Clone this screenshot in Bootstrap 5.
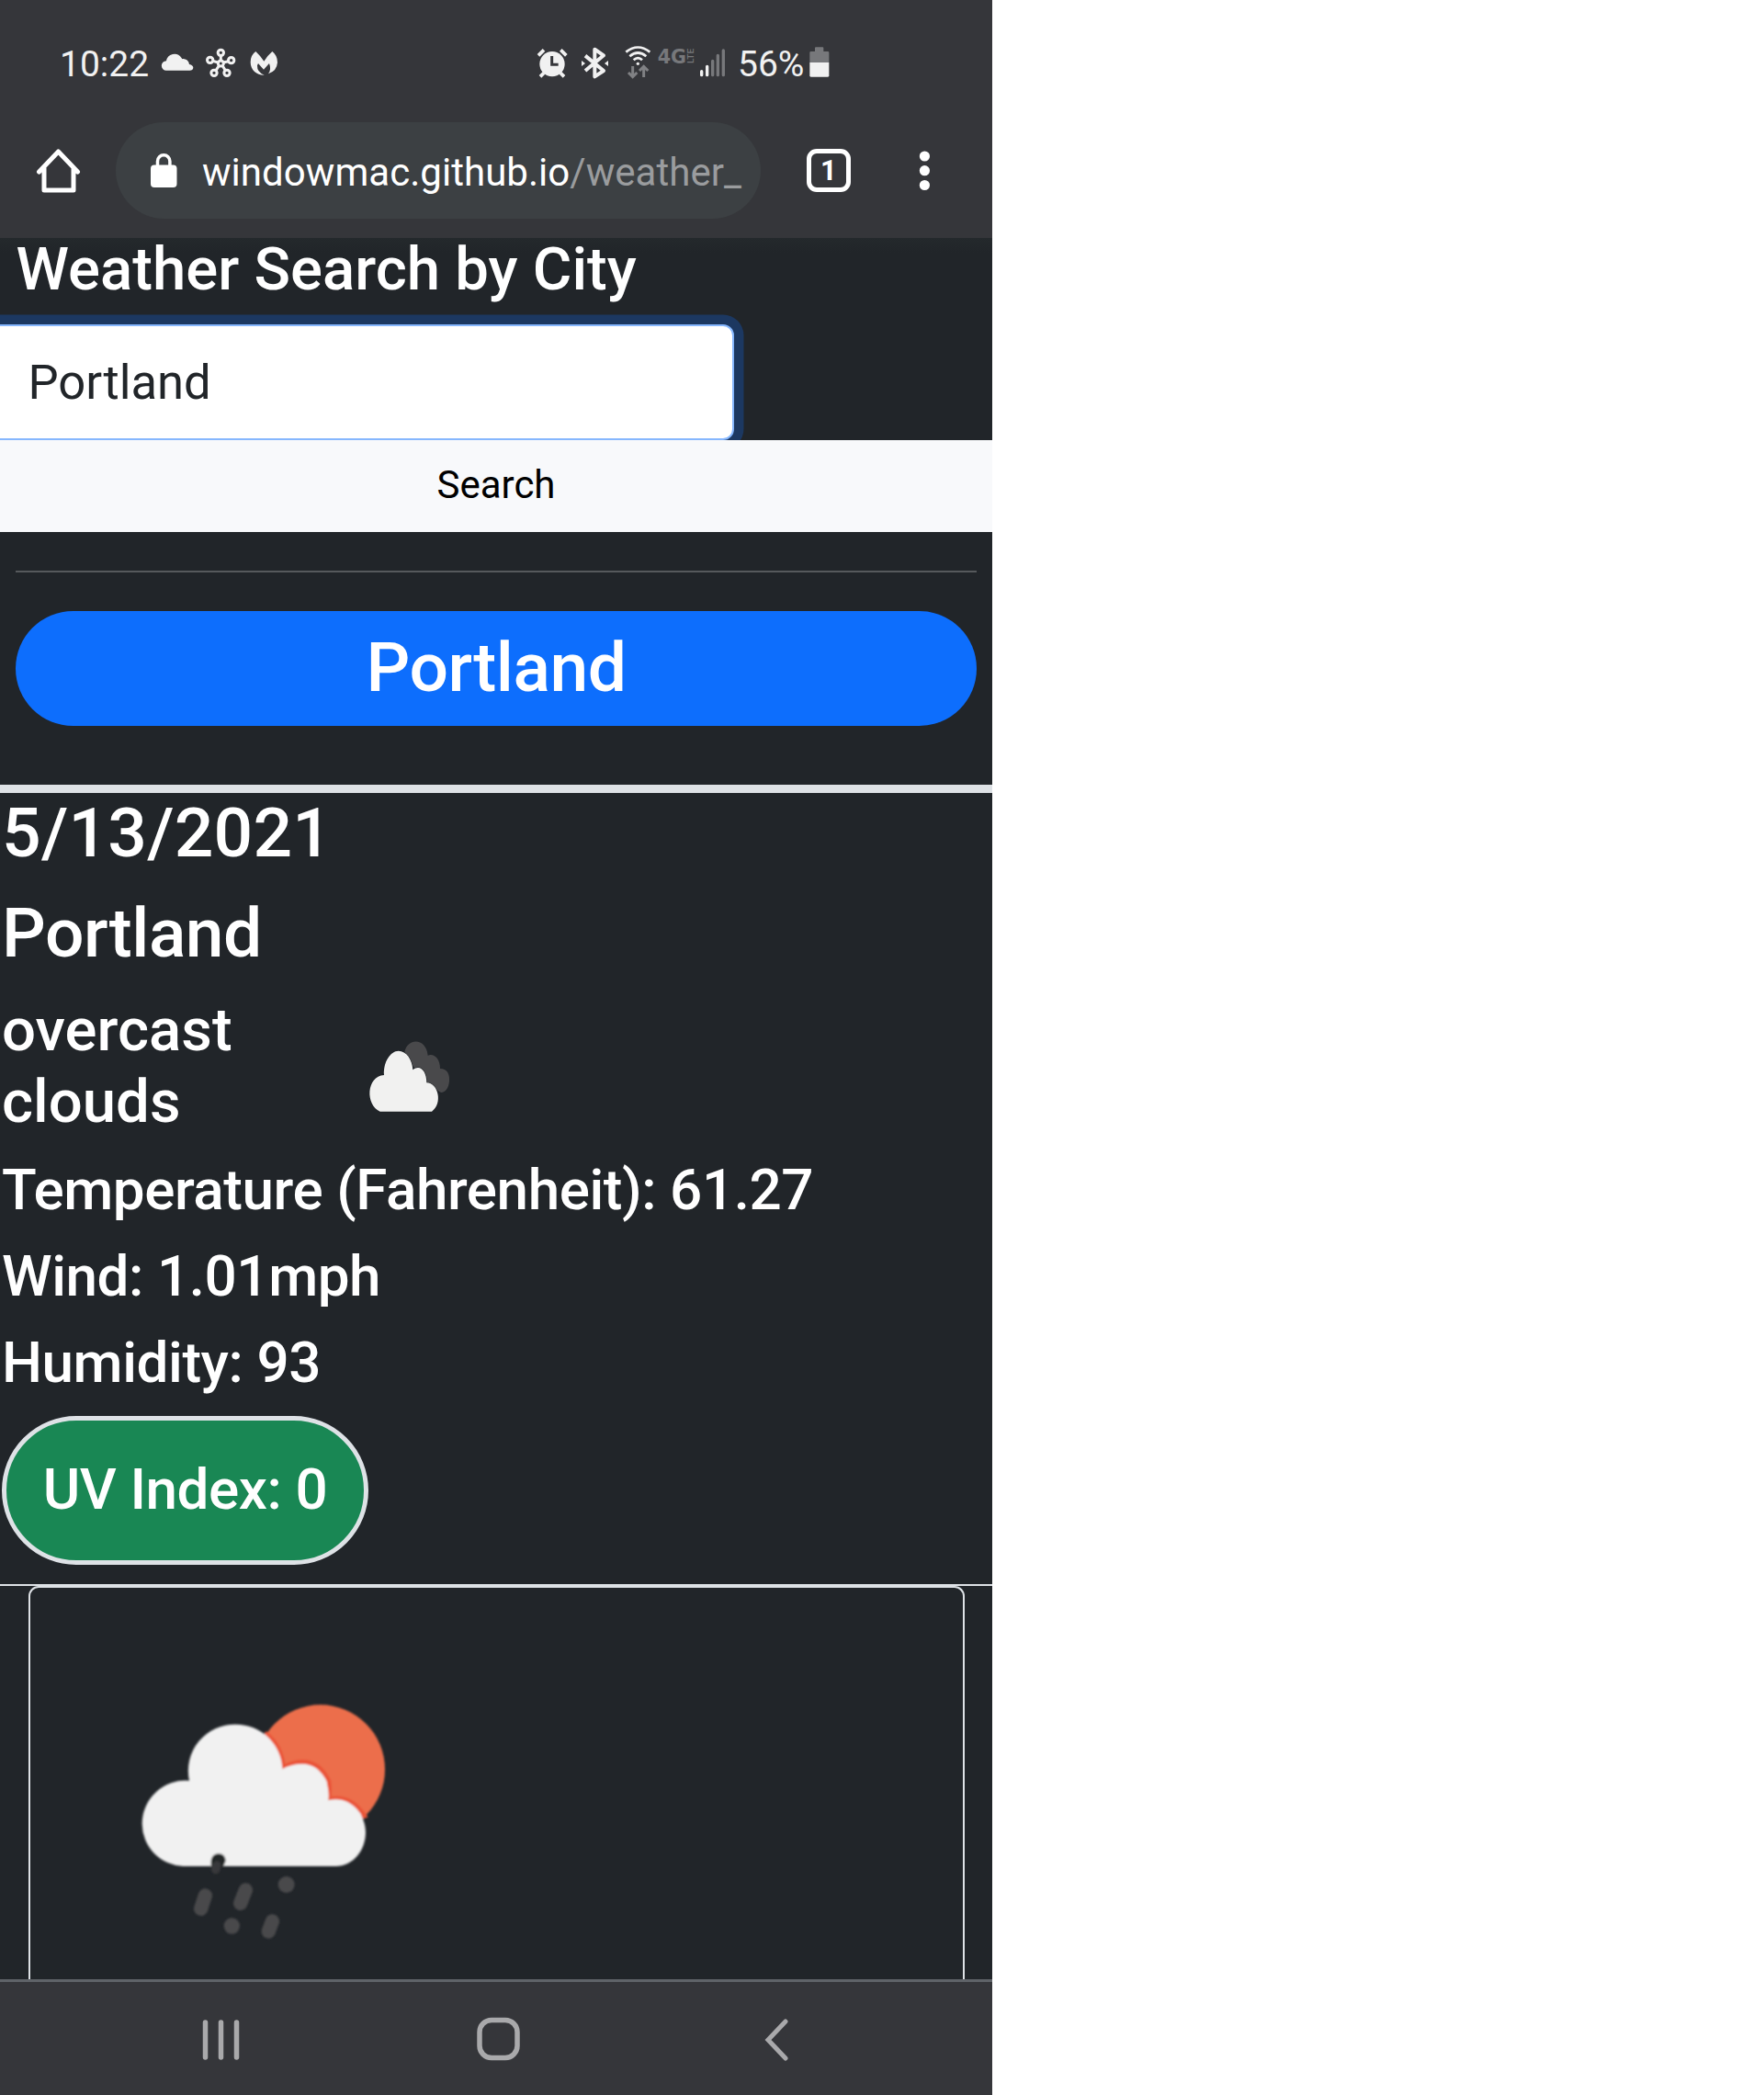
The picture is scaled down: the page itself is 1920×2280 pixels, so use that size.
<!DOCTYPE html>
<html lang="en">
<head>
<meta charset="utf-8">
<meta name="viewport" content="width=device-width, initial-scale=1">
<title>Weather Search by City</title>
<link href="https://cdn.jsdelivr.net/npm/bootstrap@5.3.0/dist/css/bootstrap.min.css" rel="stylesheet">
<style>
body{font-family:Roboto,"Liberation Sans",sans-serif;background:#fff;margin:0}
svg{display:block;flex:none}
.phone{width:1080px;height:2280px;background:#212529;color:#fff}
.chrome{background:#35363a;height:259px;flex:none}
.status{height:80px;margin-top:30px;padding-left:65px;color:#f1f1f1;font-size:39px;line-height:80px}
.status-text{white-space:nowrap}
.clock{width:108px}
.status-right{margin-left:267px}
.percent{width:77px;margin-left:7px}
.toolbar{height:149px;padding:2px 0 0 39px}
.omnibox{width:702px;height:105px;margin-left:38px;padding-left:36px;background:#3c4043;font-size:42px;white-space:nowrap;border-radius:53px}
.url{margin-left:26px;padding-top:4px;letter-spacing:.04px}
.url-path{color:#9a9c9e}
.tab-count{width:48px;height:47px;margin-left:50px;border:5px solid #fff;border-radius:11px;font-size:31px;font-weight:700;line-height:1}
.page{flex:1 1 0;min-height:0}
.fade-top{height:16px;margin-bottom:-16px;background:linear-gradient(#24292c,#212529);flex:none}
.txt-title{font-size:65.3px;font-weight:500;padding:0 0 17px 17.5px;margin:0;height:94px;white-space:nowrap;line-height:68px}
.city-input,.city-input:focus{width:815px;height:126px;margin-left:-16px;padding:0 0 0 44.5px;font-size:52.6px;color:#212529;background:#fff;border:2px solid #86b7fe;border-radius:12px;box-shadow:0 0 0 10.5px #1c3861}
.btn-search{height:100px;padding:0 0 3px;font-size:42px;line-height:1;background:#f8f9fb;color:#000;border:0;border-radius:0;position:relative}
.rule{height:2px;margin:42px 17px;background:#56595c}
.city-pill{height:125px;margin:0 17px 64px;padding-bottom:2px;background:#0d6efd;font-size:75px;letter-spacing:-.5px;font-weight:500;border-radius:63px}
.report{height:872px;border-top:9px solid #dee2e6;border-bottom:2px solid #dee2e6;padding-left:2px;flex:none}
.txt-xl{font-size:75px;line-height:90px;height:90px;font-weight:500;margin:-2px 0 21px}
.txt-date{letter-spacing:.25px}
.txt-city{letter-spacing:-.5px}
.txt-lg{font-size:65.3px;line-height:77.6px;height:155px;font-weight:500;margin:0;width:391px}
.txt-md{font-size:62px;line-height:74.4px;height:74px;font-weight:500;margin:0 0 20px;white-space:nowrap;letter-spacing:-.44px}
.cond{margin:22px 0 21px}
.cond-icon{margin-top:29px}
.uv{width:399px;height:162px;margin-top:21px;border:5px solid #dee2e6;border-radius:81px;background:#198754;font-size:62px;font-weight:500;white-space:nowrap;padding-bottom:3px;letter-spacing:-.44px}
.forecast{margin:0 30px 0 31px;border:2px solid #dee2e6;border-bottom:0;border-radius:11px 11px 0 0;flex:1 1 auto;padding:102px 0 0 97px}
.navkeys{height:126px;flex:none;background:#35363a;border-top:3px solid #5f6368;padding-left:218px}
.key-home{margin-left:254px;margin-top:2px}
.key-back{margin-left:260px}
</style>
<script src="https://cdn.jsdelivr.net/npm/bootstrap@5.3.0/dist/js/bootstrap.bundle.min.js"></script>
</head>
<body>
<div class="phone d-flex flex-column overflow-hidden">
  <header class="chrome d-flex flex-column">
    <div class="status d-flex">
      <span class="status-text clock">10:22</span>
      <svg width="140" height="80" viewBox="400 0 420 240" fill="#f1f1f1">
        <path d="M424 140a15 15 0 0 1 0-31a27 27 0 0 1 49-11q4 6 5 4a20 20 0 0 1 21 18q13 3 13 11q-1 9-12 9z"/>
        <g fill="none" stroke="#f1f1f1" stroke-width="9"><circle cx="602" cy="117" r="9"/><circle cx="602" cy="82" r="9.500"/><circle cx="567" cy="106" r="9.500"/><circle cx="636" cy="107" r="9.500"/><circle cx="580" cy="148" r="9.500"/><circle cx="622" cy="148" r="9.500"/><path d="M602 92v16M576 109l17 5M627 110l-17 4M586 140l10-15M617 140l-9-15"/></g>
        <path d="M716 78q-17 12-17 35c0 26 22 43 45 42q-24-9-23-31l3-7l18 20l18-20q8 20-3 34q28-9 30-37q0-23-17-36q-16 14-27 32q-10-16-27-32z"/>
      </svg>
      <svg class="status-right" width="216" height="80" viewBox="60 0 648 240" fill="#f1f1f1">
        <g><circle cx="123" cy="119" r="41"/><path d="M78 91l18-18M151 73l18 18M84 160l12-12M162 160l-12-12" stroke="#f1f1f1" stroke-width="11" fill="none"/><path d="M122 93v28h21" stroke="#35363a" stroke-width="9" fill="none"/></g>
        <path d="M231 92L291 141L262 160V71L291 91L231 141" fill="none" stroke="#f1f1f1" stroke-width="12" stroke-linejoin="round"/><path d="M219 108l12 9l-12 9zM306 108l-12 9l12 9z"/>
        <g fill="none" stroke="#f1f1f1" stroke-width="8"><path d="M364 80q39-31 78 0M376 94q27-23 54 0M389 106q14-13 28 0"/></g><circle cx="403" cy="118" r="5"/>
        <g fill="none" stroke="#808184" stroke-width="9"><path d="M386 126v34M372 147l14 14l14-14M422 162v-34M408 141l14-14l14 14"/></g>
        <text x="467" y="116" font-family="DejaVu Sans" font-size="64" font-weight="700" fill="#77787b" textLength="94" lengthAdjust="spacingAndGlyphs">4G</text>
        <text transform="translate(584 117) rotate(-90)" font-family="Roboto" font-size="27" font-weight="500" fill="#77787b" textLength="49" lengthAdjust="spacingAndGlyphs">LTE</text>
        <g stroke-width="10" stroke-linecap="round"><path stroke="#f1f1f1" d="M611 143v12M629 127v28"/><path stroke="#77787b" d="M647 109v46M664 91v64M682 75v80"/></g>
      </svg>
      <span class="status-text percent">56%</span>
      <svg width="24" height="80" viewBox="959 0 72 240"><path fill="#77787b" d="M963 114V82q0-4 4-4h13V67q0-3 3-3h22q3 0 3 3v11h14q4 0 4 4v32z"/><path fill="#f1f1f1" d="M963 114h63v43q0 4-4 4h-55q-4 0-4-4z"/></svg>
    </div>
    <div class="toolbar d-flex align-items-center">
      <svg width="49" height="49" viewBox="0 0 49 49" fill="none" stroke="#fff" stroke-width="5" stroke-linejoin="round" stroke-linecap="round"><path d="M3.500 26L24.500 4L45.500 26M9 22v24h32V22"/></svg>
      <div class="omnibox d-flex align-items-center">
        <svg width="32" height="40" viewBox="0 0 32 40"><rect x="2" y="13.500" width="28.500" height="24.500" rx="4" fill="#fff"/><path d="M9.500 15V9.500a6.700 6.700 0 0 1 13.400 0v5" fill="none" stroke="#fff" stroke-width="3.500"/></svg>
        <span class="url">windowmac.github.io<span class="url-path">/weather_</span></span>
      </div>
      <div class="tab-count d-flex align-items-center justify-content-center">1</div>
      <svg class="ms-auto" width="149" height="48" viewBox="0 0 149 48" fill="#fff"><circle cx="75.400" cy="8" r="5.600"/><circle cx="75.400" cy="23.700" r="5.600"/><circle cx="75.400" cy="39.500" r="5.600"/></svg>
    </div>
  </header>

  <main class="page d-flex flex-column">
    <div class="fade-top"></div>
    <h3 class="txt-title">Weather Search by City</h3>
    <input class="form-control city-input flex-shrink-0" type="text" value="Portland" aria-label="City">
    <button class="btn btn-light btn-search flex-shrink-0" type="button">Search</button>
    <div class="rule flex-shrink-0"></div>
    <div class="city-pill d-flex align-items-center justify-content-center flex-shrink-0">Portland</div>

    <section class="report">
      <h1 class="txt-xl txt-date">5/13/2021</h1>
      <h1 class="txt-xl txt-city">Portland</h1>
      <div class="cond d-flex">
        <h3 class="txt-lg">overcast<br>clouds</h3>
        <svg class="cond-icon" width="110" height="107" viewBox="39 3 330 321">
          <path fill="#49494b" d="M181 105C190 57 252 57 257 116C280 108 297 130 297 159C322 159 329 180 327 200C325 222 315 236 300 237L240 200z"/>
          <path fill="#f1f1f0" stroke="#1c2024" stroke-width="3" paint-order="stroke" d="M101 299c-49-22-45-115 13-119c-3-42 21-79 47-79s45 28 47 62c23-20 45 3 45 42c38 0 54 68 17 94z"/>
        </svg>
      </div>
      <h4 class="txt-md">Temperature (Fahrenheit): 61.27</h4>
      <h4 class="txt-md">Wind: 1.01mph</h4>
      <h4 class="txt-md">Humidity: 93</h4>
      <div class="uv d-flex align-items-center justify-content-center">UV Index: 0</div>
    </section>

    <section class="forecast">
      <svg width="320" height="300" viewBox="0 0 960 900">
        <defs><filter id="soft"><feGaussianBlur stdDeviation="3"/></filter></defs>
        <g filter="url(#soft)">
        <circle cx="656" cy="287" r="211" fill="#ec6e4c"/>
        <path fill="#f1f1f1" stroke="#ea5439" stroke-width="14" d="M480 172q50 38 55 107q102-49 149 46q5 28-1 60q70-19 118 54L600 520L400 300z"/>
        <path fill="#f1f1f1" d="M208 603A139 139 0 0 1 74 465A141 141 0 0 1 228 324A152 152 0 0 1 380 140A152 152 0 0 1 532 286C610 241 695 300 682 388C750 370 804 430 804 492C804 550 764 603 706 603z"/>
        <path fill="#232528" d="M299 607v-22q4-22 25-23q20 1 23 23l-9 22z"/>
        <path d="M318 600l-4 14" stroke="#37383a" stroke-width="28" stroke-linecap="round"/>
        <g fill="none" stroke="#4a4a4c" stroke-width="46" stroke-linecap="round"><path d="M280 699l-14 43M412 681l-17 43M499 783l-12 33"/></g>
        <g fill="#4a4a4c"><circle cx="545" cy="663" r="27"/><circle cx="367" cy="798" r="26"/></g>
        </g>
      </svg>
    </section>
  </main>

  <nav class="navkeys d-flex align-items-center">
    <svg width="45" height="48" viewBox="0 0 45 48" stroke="#a9a9ab" stroke-width="5.500" stroke-linecap="round"><path d="M5.500 6v38M22.500 6v38M39.500 6v38"/></svg>
    <svg class="key-home" width="52" height="52" viewBox="0 0 52 52" fill="none" stroke="#a9a9ab" stroke-width="5.500"><rect x="5" y="4.500" width="41" height="41" rx="13"/></svg>
    <svg class="key-back" width="32" height="48" viewBox="0 0 32 48" fill="none" stroke="#a9a9ab" stroke-width="5" stroke-linecap="round"><path d="M26 5L7 25L26 45"/></svg>
  </nav>
</div>
</body>
</html>
